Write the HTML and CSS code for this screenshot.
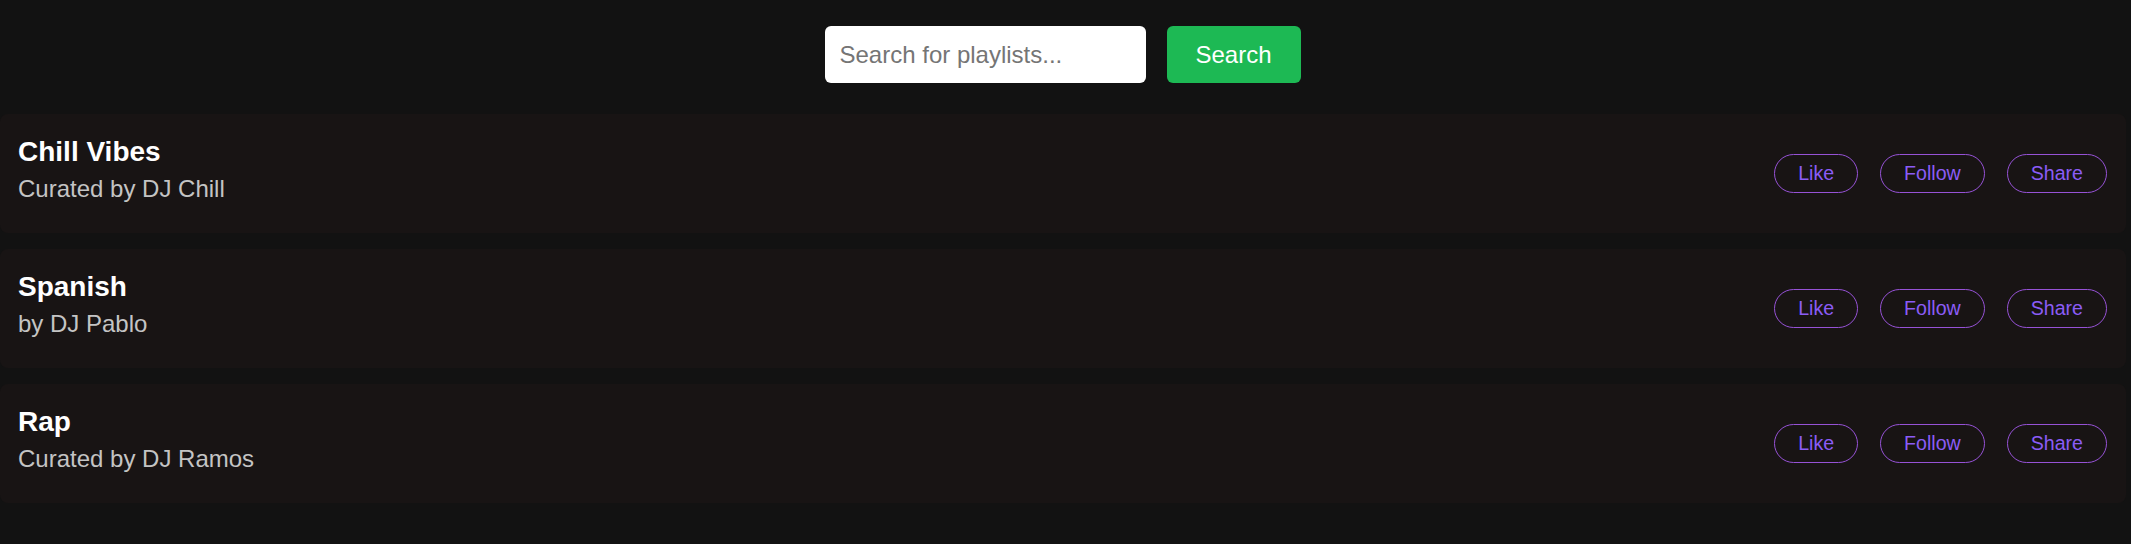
FILE: index.html
```html
<!DOCTYPE html>
<html lang="en">
<head>
<meta charset="utf-8">
<title>Playlists</title>
<link rel="stylesheet" href="styles.css">
</head>
<body>
  <header class="search-bar">
    <input class="search-input" type="text" placeholder="Search for playlists...">
    <button class="search-btn">Search</button>
  </header>
  <main class="playlist-list">
    <div class="playlist-card">
      <div class="playlist-info">
        <h2 class="playlist-title">Chill Vibes</h2>
        <p class="playlist-sub">Curated by DJ Chill</p>
      </div>
      <div class="playlist-actions">
        <button class="pill-btn">Like</button>
        <button class="pill-btn">Follow</button>
        <button class="pill-btn">Share</button>
      </div>
    </div>
    <div class="playlist-card">
      <div class="playlist-info">
        <h2 class="playlist-title">Spanish</h2>
        <p class="playlist-sub">by DJ Pablo</p>
      </div>
      <div class="playlist-actions">
        <button class="pill-btn">Like</button>
        <button class="pill-btn">Follow</button>
        <button class="pill-btn">Share</button>
      </div>
    </div>
    <div class="playlist-card">
      <div class="playlist-info">
        <h2 class="playlist-title">Rap</h2>
        <p class="playlist-sub">Curated by DJ Ramos</p>
      </div>
      <div class="playlist-actions">
        <button class="pill-btn">Like</button>
        <button class="pill-btn">Follow</button>
        <button class="pill-btn">Share</button>
      </div>
    </div>
  </main>
</body>
</html>
```

FILE: styles.css
```css
* { box-sizing: border-box; }

html, body {
  margin: 0;
  padding: 0;
  background: #121212;
  font-family: "Liberation Sans", Arial, sans-serif;
  color: #ffffff;
}

body {
  height: 544px;
  overflow: hidden;
}

.search-bar {
  display: flex;
  justify-content: center;
  gap: 21px;
  padding: 26px 6px 31px 0;
}

.search-input {
  width: 321px;
  height: 57px;
  padding: 0 15px;
  border: none;
  border-radius: 6px;
  background: #ffffff;
  font-family: "Liberation Sans", Arial, sans-serif;
  font-size: 24px;
  color: #222;
  outline: none;
}

.search-input::placeholder {
  color: #757575;
}

.search-btn {
  width: 134px;
  height: 57px;
  border: none;
  border-radius: 6px;
  background: #1db954;
  color: #ffffff;
  font-family: "Liberation Sans", Arial, sans-serif;
  font-size: 24px;
  padding: 0;
}

.playlist-list {
  display: flex;
  flex-direction: column;
  gap: 16px;
  margin-right: 5px;
}

.playlist-card {
  height: 119px;
  display: flex;
  align-items: center;
  justify-content: space-between;
  padding: 0 19px 0 18px;
  background: #181414;
  border-radius: 8px;
}

.playlist-info {
  padding-bottom: 8px;
}

.playlist-title {
  margin: 0 0 7px;
  font-size: 28px;
  font-weight: bold;
  color: #ffffff;
}

.playlist-sub {
  margin: 0;
  font-size: 24px;
  color: #c4c4c4;
}

.playlist-actions {
  display: flex;
  gap: 22px;
}

.pill-btn {
  background: transparent;
  border: 1px solid #9652d6;
  border-radius: 20px;
  color: #8b5cf6;
  font-family: "Liberation Sans", Arial, sans-serif;
  font-size: 19.6px;
  padding: 7px 23px;
  line-height: 23px;
}
```
